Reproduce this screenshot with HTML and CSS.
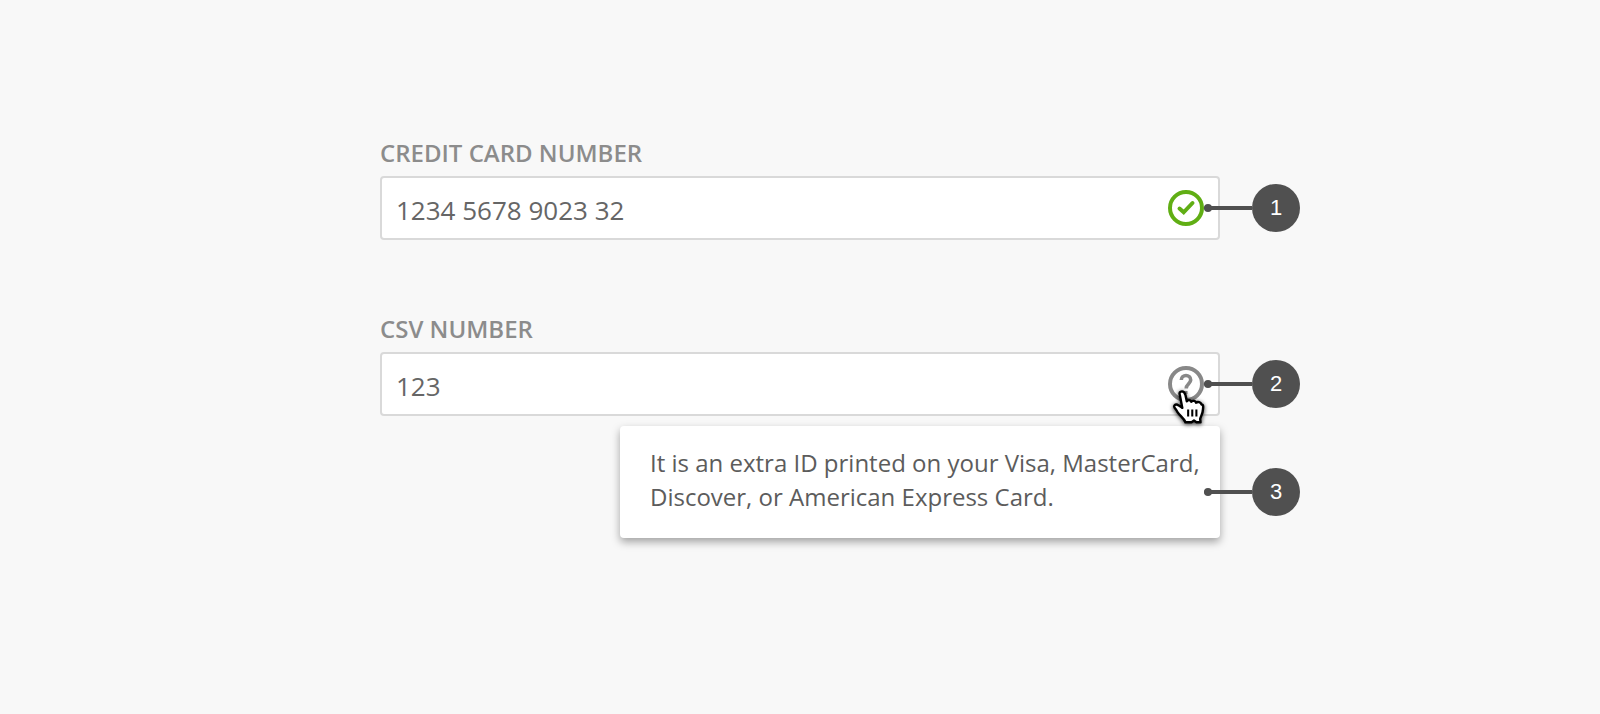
FILE: index.html
```html
<!DOCTYPE html>
<html lang="en">
<head>
<meta charset="utf-8">
<meta name="viewport" content="width=device-width, initial-scale=1">
<title>Payment details</title>
<link rel="stylesheet" href="styles.css">
</head>
<body>
<form class="form">
  <div class="field">
    <label class="label" for="card">CREDIT CARD NUMBER</label>
    <div class="control">
      <input class="input" id="card" type="text" inputmode="numeric" value="1234 5678 9023 32">
      <svg class="status" viewBox="0 0 36 36" role="img" aria-label="Valid">
        <circle cx="18" cy="18" r="16" fill="none" stroke="#60ae14" stroke-width="4"/>
        <path d="M11.5 18.500L15.700 22.300L24.500 13" fill="none" stroke="#60ae14" stroke-width="4" stroke-linecap="round"/>
      </svg>
      <div class="callout"><span class="lead"></span><span class="badge">1</span></div>
    </div>
  </div>

  <div class="field">
    <label class="label" for="csv">CSV NUMBER</label>
    <div class="control">
      <input class="input" id="csv" type="text" inputmode="numeric" value="123" aria-describedby="csv-tip">
      <button class="status help" type="button" aria-label="Help">
        <svg class="help-icon" viewBox="0 0 36 36">
          <circle cx="18" cy="18" r="16" fill="none" stroke="#888" stroke-width="4"/>
          <path d="M13.300 14C13.300 8 22.700 8 22.700 14C22.700 17.500 18.200 18 18.200 22.500" fill="none" stroke="#888" stroke-width="3.600"/>
          <path d="M16.500 25h3v3h-3z" fill="#888"/>
        </svg>
      </button>
      <svg class="cursor" viewBox="0 0 90 99" aria-hidden="true">
        <path d="M20 16C17 8 20 4 26 4C32 4 34 8 36 14L40 33C43 28 50 28 53 34C57 30 65 31 67 37C72 33 80 35 83 42C89 42 88 50 87 57C87 68 81 76 79 84L80 94H68L61 89L54 94H36C33 84 21 76 14 66C11 60 9 57 4 51C1 45 6 41 13 43C18 45 22 49 27 52Z" fill="#fff" stroke="#000" stroke-width="7" stroke-linejoin="round"/>
        <path d="M44 57V77M56 57V77M68 57V77" fill="none" stroke="#000" stroke-width="6"/>
      </svg>
      <div class="callout"><span class="lead"></span><span class="badge">2</span></div>
    </div>
  </div>

  <div class="tooltip" id="csv-tip" role="tooltip">
    <p class="tooltip-text">It is an extra ID printed on your Visa, MasterCard, Discover, or American Express Card.</p>
    <div class="callout"><span class="lead"></span><span class="badge">3</span></div>
  </div>
</form>
</body>
</html>
```
FILE: styles.css
```css
* {
  box-sizing: border-box;
}

body {
  margin: 0;
  padding: 136px 104px;
  background: #f8f8f8;
  color: #5c5c5c;
  font-family: "Open Sans", "Noto Sans", sans-serif;
}

.form {
  display: flex;
  flex-direction: column;
  max-width: 840px;
  margin: 0 auto;
}

.field {
  display: flex;
  flex-direction: column;
  gap: 6px;
}

.field + .field {
  margin-top: 72px;
}

.label {
  color: #8c8c8c;
  font-size: 24px;
  font-weight: 600;
  line-height: 34px;
}

.control {
  position: relative;
  display: flex;
}

.input {
  flex: 1;
  min-width: 0;
  height: 64px;
  padding: 4px 64px 0 14px;
  border: 2px solid #d9d9d9;
  border-radius: 4px;
  background: #fff;
  color: #666;
  font: 26px "Open Sans", "Noto Sans", sans-serif;
}

.status {
  position: absolute;
  top: 14px;
  right: 16px;
  width: 36px;
  height: 36px;
}

.help {
  padding: 0;
  border: 0;
  background: none;
  cursor: pointer;
}

.help-icon {
  display: block;
}

.cursor {
  position: absolute;
  z-index: 2;
  top: 38px;
  right: 16px;
  width: 31px;
  height: 34px;
  overflow: visible;
  filter: drop-shadow(0 1px 2px rgba(0, 0, 0, 0.8));
  pointer-events: none;
}

.callout {
  position: absolute;
  z-index: 1;
  top: 0;
  bottom: 0;
  left: calc(100% - 16px);
  display: flex;
  align-items: center;
}

.tooltip .callout {
  top: 20px;
}

.lead {
  display: flex;
  align-items: center;
  width: 48px;
  height: 4px;
  background: #505050;
  border-radius: 2px 0 0 2px;
}

.lead::before {
  content: "";
  flex: none;
  width: 8px;
  height: 8px;
  border-radius: 50%;
  background: #505050;
}

.badge {
  display: flex;
  align-items: center;
  justify-content: center;
  width: 48px;
  height: 48px;
  border-radius: 50%;
  background: #505050;
  color: #fff;
  font: 22px "Liberation Sans", Arial, sans-serif;
}

.tooltip {
  position: relative;
  align-self: flex-end;
  width: 100%;
  max-width: 600px;
  margin-top: 10px;
  padding: 20px 20px 24px 30px;
  border-radius: 4px;
  background: #fff;
  box-shadow: 0 4px 8px rgba(0, 0, 0, 0.35);
}

.tooltip-text {
  margin: 0;
  font-size: 24px;
  line-height: 34px;
}
```
